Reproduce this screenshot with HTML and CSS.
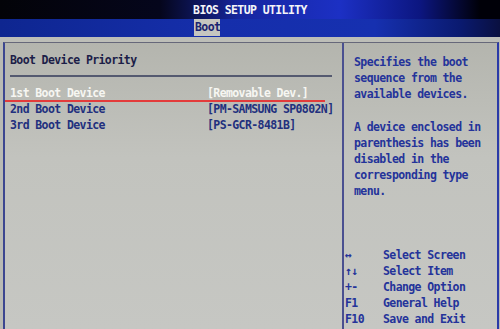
FILE: index.html
```html
<!DOCTYPE html>
<html>
<head>
<meta charset="utf-8">
<link rel="stylesheet" href="styles.css">
</head>
<body>
<div class="screen">
  <div class="titlebar"><span class="title">BIOS SETUP UTILITY</span></div>
  <div class="menubar"><span class="tab">Boot</span></div>
  <div class="strip"></div>
  <div class="main">
    <div class="left">
      <div class="heading">Boot Device Priority</div>
      <div class="rule"></div>
      <div class="row selected"><span class="label">1st Boot Device</span><span class="value">[Removable Dev.]</span></div>
      <div class="row"><span class="label">2nd Boot Device</span><span class="value">[PM-SAMSUNG SP0802N]</span></div>
      <div class="row"><span class="label">3rd Boot Device</span><span class="value">[PS-GCR-8481B]</span></div>
    </div>
    <div class="right">
      <div class="help">
        <div>Specifies the boot</div>
        <div>sequence from the</div>
        <div>available devices.</div>
        <div class="blank"></div>
        <div>A device enclosed in</div>
        <div>parenthesis has been</div>
        <div>disabled in the</div>
        <div>corresponding type</div>
        <div>menu.</div>
      </div>
      <div class="keys">
        <div class="key"><span class="k">&#8596;</span><span>Select Screen</span></div>
        <div class="key"><span class="k">&#8593;&#8595;</span><span>Select Item</span></div>
        <div class="key"><span class="k">+-</span><span>Change Option</span></div>
        <div class="key"><span class="k">F1</span><span>General Help</span></div>
        <div class="key"><span class="k">F10</span><span>Save and Exit</span></div>
      </div>
    </div>
  </div>
</div>
</body>
</html>
```
FILE: styles.css
```css
* { box-sizing: border-box; }
html, body { margin: 0; padding: 0; }
body {
  width: 500px;
  height: 329px;
  overflow: hidden;
  background: #b9bab4;
  font-family: "DejaVu Sans Mono", "Liberation Mono", monospace;
  font-weight: bold;
  font-size: 11.5px;
  letter-spacing: -0.6px;
  line-height: 16px;
}
.screen { display: flex; flex-direction: column; height: 329px; }
.titlebar {
  height: 19px;
  background: linear-gradient(90deg, #030308 0%, #05061c 32%, #1626a0 48%, #1c30c4 68%, #0c1680 84%, #000008 96%);
  display: flex;
  justify-content: center;
  align-items: flex-end;
  padding-bottom: 1px;
}
.title { color: #f4f4f8; line-height: 16px; }
.menubar {
  height: 18px;
  background: linear-gradient(90deg, #0e2690 0%, #152eaa 40%, #1630b0 75%, #0a1a70 92%, #0a1040 100%);
  display: flex;
  padding-left: 194px;
}
.tab {
  background: #c6c6c0;
  color: #1a2470;
  width: 26px;
  height: 17px;
  line-height: 17px;
  padding-left: 1px;
}
.strip { height: 5px; background: #bdbeb8; }
.main {
  flex: 1;
  display: flex;
  margin-left: 3px;
  margin-right: 1px;
  border-left: 2px solid #3c4690;
  border-top: 1px solid #66687a;
  border-right: 2px solid #2a3aa8;
  background: linear-gradient(180deg, #b4b5ae 0%, #c2c3be 40%, #c6c7c3 100%);
}
.left {
  width: 339px;
  border-right: 2px solid #4a5090;
  padding: 9px 8px 0 5px;
  color: #22307e;
}
.heading { color: #1c1e48; }
.rule { height: 2px; background: #555a70; margin: 7px 2px 8px 0; }
.row { display: flex; position: relative; }
.label { width: 197px; }
.selected { color: #f6f6f2; }
.selected::after {
  content: "";
  position: absolute;
  left: -5px;
  width: 320px;
  bottom: -1px;
  height: 2px;
  background: #e33b3b;
}
.right {
  flex: 1;
  display: flex;
  flex-direction: column;
  justify-content: space-between;
  padding: 11px 0 2px 10px;
  color: #24339a;
}
.blank { height: 17px; }
.keys { margin-left: -10px; }
.key { display: flex; }
.k { width: 39px; padding-left: 1px; }
```
